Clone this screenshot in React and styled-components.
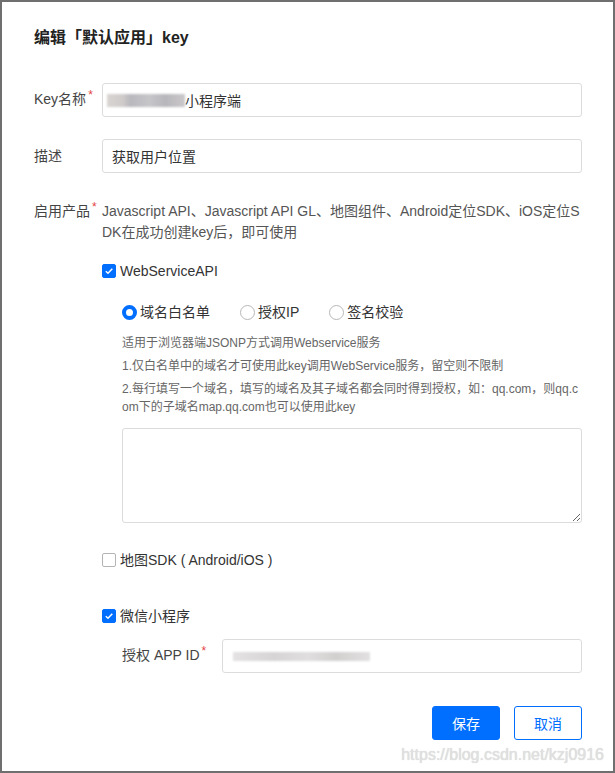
import React, { useState } from "react";
import styled, { createGlobalStyle } from "styled-components";

const GlobalStyle = createGlobalStyle`
  html, body {
    margin: 0;
    padding: 0;
    background: #fff;
  }
  body {
    font-family: "Liberation Sans", "Noto Sans CJK SC", sans-serif;
  }
  * {
    box-sizing: border-box;
  }
`;

const BLUE = "#006eff";

const EditKeyDialog = () => {
  const [webService, setWebService] = useState(true);
  const [mapSdk, setMapSdk] = useState(false);
  const [miniProgram, setMiniProgram] = useState(true);
  const [mode, setMode] = useState("domain");

  return (
    <Dialog>
      <Title>编辑「默认应用」key</Title>
      <Form>
        <Row>
          <Label>
            Key名称<Star>*</Star>
          </Label>
          <FakeInput>
            <Smudge width={78} height={13} />
            小程序端
          </FakeInput>
        </Row>

        <Row gap={22}>
          <Label>描述</Label>
          <FakeInput>获取用户位置</FakeInput>
        </Row>

        <Row gap={28} top>
          <Label>
            启用产品<Star>*</Star>
          </Label>
          <Products>
            <Line>Javascript API、Javascript API GL、地图组件、Android定位SDK、iOS定位S</Line>
            <Line>DK在成功创建key后，即可使用</Line>
          </Products>
        </Row>

        <Controls>
          <Check gap={17} checked={webService} onClick={() => setWebService(!webService)}>
            <Box checked={webService}>{webService && <Tick />}</Box>
            WebServiceAPI
          </Check>

          <Sub>
            <Radios>
              {[
                ["domain", "域名白名单"],
                ["ip", "授权IP"],
                ["sign", "签名校验"],
              ].map(([key, text]) => (
                <RadioItem key={key} onClick={() => setMode(key)}>
                  <RadioDot checked={mode === key} />
                  {text}
                </RadioItem>
              ))}
            </Radios>
            <Help>
              <HelpLine>适用于浏览器端JSONP方式调用Webservice服务</HelpLine>
              <HelpLine>1.仅白名单中的域名才可使用此key调用WebService服务，留空则不限制</HelpLine>
              <HelpLine>
                <Line>2.每行填写一个域名，填写的域名及其子域名都会同时得到授权，如：qq.com，则qq.c</Line>
                <Line>om下的子域名map.qq.com也可以使用此key</Line>
              </HelpLine>
            </Help>
            <Area />
          </Sub>

          <Check gap={26} checked={mapSdk} onClick={() => setMapSdk(!mapSdk)}>
            <Box checked={mapSdk}>{mapSdk && <Tick />}</Box>
            地图SDK ( Android/iOS )
          </Check>

          <Check gap={34} checked={miniProgram} onClick={() => setMiniProgram(!miniProgram)}>
            <Box checked={miniProgram}>{miniProgram && <Tick />}</Box>
            微信小程序
          </Check>

          <Sub>
            <Row gap={12}>
              <SubLabel>
                授权 APP ID<Star>*</Star>
              </SubLabel>
              <FakeInput>
                <Smudge width={137} height={9} light />
              </FakeInput>
            </Row>
          </Sub>
        </Controls>
      </Form>

      <Footer>
        <Button primary>保存</Button>
        <Button>取消</Button>
      </Footer>

      <Watermark>https://blog.csdn.net/kzj0916</Watermark>
    </Dialog>
  );
};

const Tick = () => (
  <svg width="10" height="10" viewBox="0 0 10 10">
    <path d="M1.8 5.2 L4 7.3 L8.3 2.8" fill="none" stroke="#fff" strokeWidth="1.5" />
  </svg>
);

// Styled-components
const Dialog = styled.div`
  position: relative;
  width: 615px;
  height: 773px;
  border: 2px solid #6f6f6f;
  padding: 24px 31px 0 32px;
  background: #fff;
  color: #333;
  font-size: 14px;
`;

const Title = styled.h2`
  margin: 0;
  font-size: 16px;
  line-height: 24px;
  font-weight: bold;
  color: #222;
`;

const Form = styled.div`
  margin-top: 33px;
`;

const Row = styled.div`
  display: flex;
  align-items: ${(p) => (p.top ? "flex-start" : "center")};
  margin-top: ${(p) => p.gap || 0}px;
`;

const Label = styled.div`
  width: 68px;
  flex-shrink: 0;
  color: #444;
  line-height: 21px;
  white-space: nowrap;
`;

const SubLabel = styled(Label)`
  width: 100px;
`;

const Star = styled.span`
  color: #e54545;
  font-size: 12px;
  margin-left: 2px;
  position: relative;
  top: -5px;
`;

const FakeInput = styled.div`
  flex: 1;
  height: 34px;
  display: flex;
  align-items: center;
  padding: 0 9px;
  border: 1px solid #dcdcdc;
  border-radius: 3px;
  color: #333;
  background: #fff;
`;

const Smudge = styled.span`
  display: inline-block;
  width: ${(p) => p.width}px;
  height: ${(p) => p.height}px;
  margin-left: ${(p) => (p.light ? 1 : -5)}px;
  background: ${(p) =>
    p.light
      ? "linear-gradient(90deg, #e4e2e2 0%, #d6d4d4 30%, #e0dede 55%, #d2cfcf 75%, #e2e0e0 100%)"
      : "linear-gradient(90deg, #d8d4d2 0%, #cfcbca 20%, #b9b8bd 30%, #c6c5c8 55%, #b7b6bb 75%, #cbc9ca 100%)"};
  filter: blur(1px);
`;

const Products = styled.div`
  flex: 1;
  color: #555;
  line-height: 21px;
`;

const Line = styled.span`
  display: block;
  white-space: nowrap;
`;

const Controls = styled.div`
  padding-left: 68px;
`;

const Check = styled.div`
  display: flex;
  align-items: center;
  gap: 4px;
  margin-top: ${(p) => p.gap}px;
  line-height: 22px;
  color: #333;
  cursor: pointer;
`;

const Box = styled.span`
  width: 14px;
  height: 14px;
  display: flex;
  align-items: center;
  justify-content: center;
  border-radius: 2px;
  background: ${(p) => (p.checked ? BLUE : "#fff")};
  border: 1px solid ${(p) => (p.checked ? BLUE : "#b5b5b5")};
`;

const Sub = styled.div`
  padding-left: 20px;
`;

const Radios = styled.div`
  display: flex;
  gap: 30px;
  margin-top: 19px;
  line-height: 22px;
`;

const RadioItem = styled.div`
  display: flex;
  align-items: center;
  gap: 3px;
  color: #333;
  cursor: pointer;
`;

const RadioDot = styled.span`
  width: 15px;
  height: 15px;
  border-radius: 50%;
  background: #fff;
  border: ${(p) => (p.checked ? `4.5px solid ${BLUE}` : "1px solid #b8b8b8")};
`;

const Help = styled.div`
  margin-top: 11px;
  font-size: 12px;
  line-height: 18px;
  color: #666;
`;

const HelpLine = styled.p`
  margin: 0 0 5px;
  white-space: nowrap;

  &:last-child {
    margin-bottom: 0;
  }
`;

const Area = styled.textarea`
  display: block;
  width: 100%;
  height: 95px;
  margin-top: 12px;
  border: 1px solid #dcdcdc;
  border-radius: 3px;
  font-family: inherit;
  font-size: 14px;
  outline: none;
`;

const Footer = styled.div`
  display: flex;
  justify-content: flex-end;
  gap: 14px;
  margin-top: 33px;
`;

const Button = styled.button`
  width: 68px;
  height: 34px;
  border-radius: 3px;
  font-family: inherit;
  font-size: 14px;
  cursor: pointer;
  border: 1px solid ${BLUE};
  background: ${(p) => (p.primary ? BLUE : "#fff")};
  color: ${(p) => (p.primary ? "#fff" : BLUE)};
`;

const Watermark = styled.div`
  position: absolute;
  right: 9px;
  bottom: 6px;
  font-size: 16px;
  line-height: 20px;
  color: #e0e0e0;
  text-shadow: 0 0 1px #cfcfcf;
  pointer-events: none;
`;

export default function App() {
  return (
    <>
      <GlobalStyle />
      <EditKeyDialog />
    </>
  );
}
